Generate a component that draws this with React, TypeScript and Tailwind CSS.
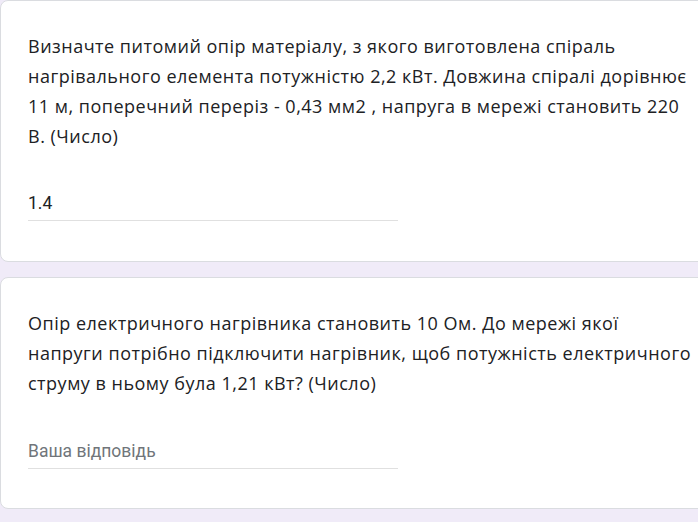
import React from "react";

const q1 = [
  "Визначте питомий опір матеріалу, з якого виготовлена спіраль",
  "нагрівального елемента потужністю 2,2 кВт. Довжина спіралі дорівнює",
  "11 м, поперечний переріз - 0,43 мм2 , напруга в мережі становить 220",
  "В. (Число)",
];
const q2 = [
  "Опір електричного нагрівника становить 10 Ом. До мережі якої",
  "напруги потрібно підключити нагрівник, щоб потужність електричного",
  "струму в ньому була 1,21 кВт? (Число)",
];

function Card({ lines, answer, placeholder, h, gap }: { lines: string[]; answer: string; placeholder?: boolean; h: string; gap: string }) {
  return (
    <div className={`bg-white border border-[#dadce0] rounded-l-[8px] ml-0 mr-[-20px] ${h} pl-[27px] pt-[30px]`}>
      <div className="text-[18px] leading-[30px] tracking-[0.5px] text-[#202124] whitespace-nowrap font-['Open_Sans',sans-serif]">
        {lines.map((l, i) => (
          <div key={i}>{l}</div>
        ))}
      </div>
      <div className={`${gap} w-[370px] border-b border-[#e0e0e0] pb-[5px]`}>
        <div className={`text-[17.5px] leading-[24px] font-['Roboto',sans-serif] ${placeholder ? "text-[#70757a]" : "text-[#202124]"}`}>
          {answer}
        </div>
      </div>
    </div>
  );
}

export default function App() {
  return (
    <div className="w-[698px] h-[522px] overflow-hidden bg-[#f0ebf8]">
      <Card lines={q1} answer="1.4" h="h-[262px]" gap="mt-[40px]" />
      <div className="h-[15px]" />
      <Card lines={q2} answer="Ваша відповідь" placeholder h="h-[232px]" gap="mt-[41px]" />
    </div>
  );
}
